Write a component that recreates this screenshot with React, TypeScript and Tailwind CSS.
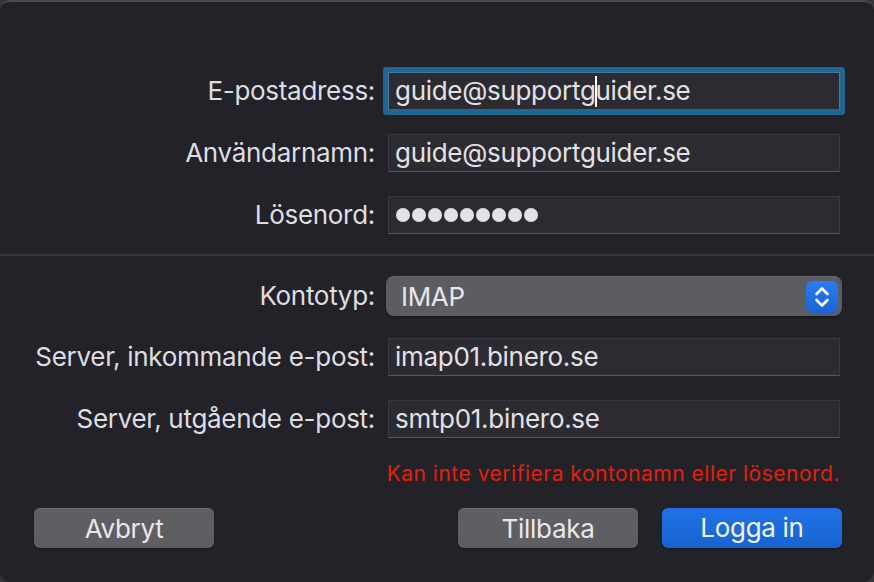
import React from "react";

const font = { fontFamily: '"Inter", "Noto Sans", sans-serif' };

function Label({ children }: { children: React.ReactNode }) {
  return (
    <div className="w-[341px] shrink-0 text-right text-[26px] leading-none text-[#dedde2] tracking-[-0.3px]">{children}</div>
  );
}

function Field({ value, focused }: { value: React.ReactNode; focused?: boolean }) {
  return (
    <div
      className={
        "w-[452px] h-[38px] flex items-center pl-[6px] text-[26px] leading-none text-[#e2e1e6] bg-[#2c2b31] border border-[#3a3940] border-b-[#58575d] tracking-[-0.3px] " +
        (focused ? "rounded-[1px] border-[#3f7ba6] shadow-[0_0_0_5px_#22668f]" : "")
      }
    >
      {value}
    </div>
  );
}

function Row({ label, children, className }: { label: string; children: React.ReactNode; className?: string }) {
  return (
    <div className={"flex items-center gap-[13px] " + (className || "")}>
      <Label>{label}</Label>
      {children}
    </div>
  );
}

function Button({ children, primary }: { children: React.ReactNode; primary?: boolean }) {
  return (
    <button
      className={
        "w-[180px] h-[40px] rounded-[6px] text-[26px] leading-none tracking-[-0.3px] shadow-[0_1px_1px_rgba(0,0,0,0.35)] " +
        (primary
          ? "bg-gradient-to-b from-[#1f72e6] to-[#1963d2] text-[#f2f4fa]"
          : "bg-[#5f5e63] text-[#e8e7ec] border-t border-[#6d6c71]")
      }
    >
      {children}
    </button>
  );
}

export default function App() {
  return (
    <div className="w-[874px] h-[582px] bg-[#36353a] overflow-hidden" style={font}>
      <div className="h-[582px] rounded-[10px] bg-[#232228] border-t-2 border-[#4a494f] pt-[70px]">
        <div className="pl-[34px] pr-[32px]">
          <Row label="E-postadress:">
            <Field
              focused
              value={
                <span className="flex items-center">
                  guide@supportg<span className="inline-block w-[2px] h-[31px] bg-white mx-[-1px]" />uider.se
                </span>
              }
            />
          </Row>
          <Row label="Användarnamn:" className="mt-[24px]">
            <Field value="guide@supportguider.se" />
          </Row>
          <Row label="Lösenord:" className="mt-[24px]">
            <Field
              value={
                <span className="flex gap-[2px] pl-[1px]">
                  {Array.from({ length: 9 }).map((_, i) => (
                    <span key={i} className="w-[14px] h-[14px] rounded-full bg-[#e2e1e6]" />
                  ))}
                </span>
              }
            />
          </Row>
        </div>

        <div className="mt-[20px] h-[2px] bg-[#38373d]" />

        <div className="pl-[34px] pr-[32px]">
          <Row label="Kontotyp:" className="mt-[20px]">
            <div className="w-[456px] h-[40px] -ml-[2px] rounded-[8px] bg-[#5d5c61] border-t border-[#6a696e] shadow-[0_1px_2px_rgba(0,0,0,0.4)] flex items-center justify-between pl-[15px] pr-[4px]">
              <span className="text-[26px] leading-none text-[#e8e7ec] tracking-[-0.3px]">IMAP</span>
              <span className="w-[32px] h-[32px] rounded-[6px] bg-gradient-to-b from-[#2a7df2] to-[#1a62d5] flex items-center justify-center">
                <svg width="18" height="26" viewBox="0 0 18 26" fill="none" stroke="white" strokeWidth="2.6" strokeLinecap="round" strokeLinejoin="round">
                  <path d="M3.5 10 L9 4.5 L14.5 10" />
                  <path d="M3.5 16 L9 21.5 L14.5 16" />
                </svg>
              </span>
            </div>
          </Row>
          <Row label="Server, inkommande e-post:" className="mt-[22px]">
            <Field value="imap01.binero.se" />
          </Row>
          <Row label="Server, utgående e-post:" className="mt-[24px]">
            <Field value="smtp01.binero.se" />
          </Row>

          <div className="mt-[25px] h-[20px] flex items-center justify-end pr-[2px] text-[21px] leading-none text-[#e3200b] tracking-[0.5px]">
            Kan inte verifiera kontonamn eller lösenord.
          </div>

          <div className="mt-[25px] flex items-center">
            <Button>Avbryt</Button>
            <div className="flex-1" />
            <Button>Tillbaka</Button>
            <div className="w-[24px]" />
            <Button primary>Logga in</Button>
          </div>
        </div>
      </div>
    </div>
  );
}
